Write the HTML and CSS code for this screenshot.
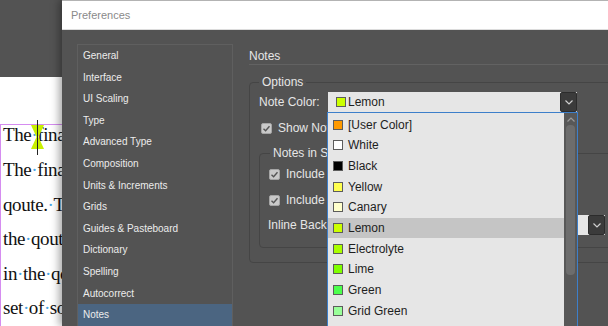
FILE: index.html
```html
<!DOCTYPE html>
<html lang="en">
<head>
<meta charset="UTF-8">
<title>Preferences</title>
<link rel="stylesheet" href="styles.css">
</head>
<body>
<div class="doc">
  <div class="pasteboard"></div>
  <div class="page">
    <div class="frame">
      <div class="story">
        <p>The<span class="sp">·</span>final<span class="sp">·</span>quote</p>
        <p>The<span class="sp">·</span>final<span class="sp">·</span>set</p>
        <p>qoute.<span class="sp">·</span>The<span class="sp">·</span>end</p>
        <p>the<span class="sp">·</span>qoute<span class="sp">·</span>is</p>
        <p>in<span class="sp">·</span>the<span class="sp">·</span>qoute</p>
        <p>set<span class="sp">·</span>of<span class="sp">·</span>some</p>
      </div>
      <svg class="anchor" width="13" height="24" viewBox="0 0 13 24"><polygon points="0,0 13,0 7.5,12 13,24 0,24 5.5,12" fill="#c8f000"/></svg>
      <span class="caret"></span>
    </div>
  </div>
</div>

<div class="dialog">
  <div class="titlebar">Preferences</div>
  <div class="dialog-body">
    <ul class="nav">
      <li>General</li>
      <li>Interface</li>
      <li>UI Scaling</li>
      <li>Type</li>
      <li>Advanced Type</li>
      <li>Composition</li>
      <li>Units &amp; Increments</li>
      <li>Grids</li>
      <li>Guides &amp; Pasteboard</li>
      <li>Dictionary</li>
      <li>Spelling</li>
      <li>Autocorrect</li>
      <li class="active">Notes</li>
    </ul>

    <div class="pane">
      <h2 class="pane-title">Notes</h2>
      <fieldset class="group">
        <legend>Options</legend>
        <div class="field">
          <span class="field-label">Note Color:</span>
          <div class="select note-select">
            <span class="swatch sw-lemon"></span>
            <span class="select-value">Lemon</span>
            <span class="select-btn"><svg width="8" height="5" viewBox="0 0 8 5"><polyline points="0.5,0.5 4,4 7.5,0.5" fill="none" stroke="#cfcfcf" stroke-width="1.2"/></svg></span>
            <div class="dropdown">
              <ul class="options">
                <li><span class="swatch sw-user"></span>[User Color]</li>
                <li><span class="swatch sw-white"></span>White</li>
                <li><span class="swatch sw-black"></span>Black</li>
                <li><span class="swatch sw-yellow"></span>Yellow</li>
                <li><span class="swatch sw-canary"></span>Canary</li>
                <li class="hover"><span class="swatch sw-lemon"></span>Lemon</li>
                <li><span class="swatch sw-electrolyte"></span>Electrolyte</li>
                <li><span class="swatch sw-lime"></span>Lime</li>
                <li><span class="swatch sw-green"></span>Green</li>
                <li><span class="swatch sw-gridgreen"></span>Grid Green</li>
                <li><span class="swatch sw-darkgreen"></span>Dark Green</li>
              </ul>
              <div class="scrollbar">
                <svg class="scroll-up" width="8" height="5" viewBox="0 0 8 5"><polyline points="0.5,4.5 4,1 7.5,4.5" fill="none" stroke="#9a9a9a" stroke-width="1.2"/></svg>
                <div class="thumb"></div>
              </div>
            </div>
          </div>
        </div>

        <label class="check">
          <span class="box"><svg width="9" height="9" viewBox="0 0 9 9"><polyline points="1.5,4.8 3.6,6.8 7.5,2.2" fill="none" stroke="#555" stroke-width="1.4"/></svg></span>
          Show Note Tool Tips
        </label>

        <fieldset class="group inner">
          <legend>Notes in Story Editor</legend>
          <label class="check">
            <span class="box"><svg width="9" height="9" viewBox="0 0 9 9"><polyline points="1.5,4.8 3.6,6.8 7.5,2.2" fill="none" stroke="#555" stroke-width="1.4"/></svg></span>
            Include Note Content When Checking Spelling
          </label>
          <label class="check">
            <span class="box"><svg width="9" height="9" viewBox="0 0 9 9"><polyline points="1.5,4.8 3.6,6.8 7.5,2.2" fill="none" stroke="#555" stroke-width="1.4"/></svg></span>
            Include Note Content in Find/Change Operations
          </label>
          <div class="field">
            <span class="field-label wide">Inline Background:</span>
            <div class="select bg-select">
              <span class="select-value">Gray</span>
              <span class="select-btn"><svg width="8" height="5" viewBox="0 0 8 5"><polyline points="0.5,0.5 4,4 7.5,0.5" fill="none" stroke="#cfcfcf" stroke-width="1.2"/></svg></span>
            </div>
          </div>
        </fieldset>
      </fieldset>
    </div>
  </div>
</div>
</body>
</html>
```

FILE: styles.css
```css
* {
  box-sizing: border-box;
}

html,
body {
  margin: 0;
  height: 326px;
  overflow: hidden;
  background: #535353;
  font-family: "Liberation Sans", Arial, sans-serif;
}

body {
  display: flex;
}

/* document behind the dialog */
.doc {
  width: 62px;
  flex: none;
  display: flex;
  flex-direction: column;
  overflow: hidden;
}

.pasteboard {
  height: 81px;
  background: #535353;
}

.page {
  flex: 1;
  background: #fff;
  padding-top: 47px;
}

.frame {
  position: relative;
  height: 100%;
  border-top: 1px solid #d58cf0;
  border-left: 1px solid #d58cf0;
}

.story {
  margin-top: -7px;
  padding-left: 2px;
  font-family: "Liberation Serif", "Times New Roman", serif;
  font-size: 19px;
  letter-spacing: -0.4px;
  line-height: 34.6px;
  color: #111;
  white-space: nowrap;
}

.story p {
  margin: 0;
}

.sp {
  color: #4aa6e6;
}

.anchor {
  position: absolute;
  left: 30px;
  top: 0;
}

.caret {
  position: absolute;
  left: 36px;
  top: -5px;
  width: 1px;
  height: 35px;
  background: #222;
}

/* dialog */
.dialog {
  flex: 1;
  position: relative;
  z-index: 1;
  display: flex;
  flex-direction: column;
  background: #535353;
  box-shadow: -3px 0 8px rgba(0, 0, 0, 0.35);
  overflow: hidden;
}

.titlebar {
  height: 30px;
  flex: none;
  background: #fff;
  border-top: 1px solid #b3b3b3;
  border-bottom: 1px solid #dcdcdc;
  padding-left: 9px;
  font-size: 11px;
  line-height: 28px;
  color: #8a8a8a;
}

.dialog-body {
  flex: 1;
  display: flex;
  align-items: flex-start;
  padding-left: 15px;
}

.nav {
  list-style: none;
  margin: 14px 0 0;
  padding: 0;
  width: 156px;
  height: 320px;
  flex: none;
  border: 1px solid #5f5f5f;
}

.nav li {
  height: 21.6px;
  line-height: 21.6px;
  padding-left: 5px;
  font-size: 10px;
  color: #ececec;
}

.nav li.active {
  background: #4b6581;
}

.pane {
  flex: 1;
  margin: 18px 0 0 16px;
  color: #e6e6e6;
  font-size: 12px;
}

.pane-title {
  margin: 0;
  font-size: 12px;
  font-weight: normal;
  line-height: 16px;
  border-bottom: 1px solid #626262;
}

.group {
  margin: 10px 0 0;
  padding: 3px 0 14px 9px;
  width: 430px;
  min-width: 0;
  border: 1px solid #454545;
  border-radius: 4px;
}

.group legend {
  padding: 0 3px;
  line-height: 14px;
  color: #e6e6e6;
}

.group.inner {
  margin-top: 10px;
  padding: 6px 0 12px 8px;
  width: 400px;
}

.group.inner legend {
  margin-left: 2px;
}

.field {
  display: flex;
  align-items: center;
}

.field-label {
  width: 69px;
  flex: none;
}

.field-label.wide {
  width: 104px;
}

.inner .field {
  margin-top: 7px;
}

.select {
  position: relative;
  display: flex;
  align-items: center;
  height: 20px;
  background: #e6e6e6;
  color: #1e1e1e;
}

.note-select {
  width: 249px;
  padding-left: 8px;
}

.bg-select {
  width: 233px;
  padding-left: 6px;
}

.select-value {
  flex: 1;
  margin-left: 2px;
}

.select-btn {
  width: 17px;
  height: 20px;
  display: flex;
  align-items: center;
  justify-content: center;
  background: #3b3b3b;
  border: 1px solid #2c2c2c;
  border-radius: 2px;
}

.swatch {
  display: inline-block;
  width: 11px;
  height: 11px;
  flex: none;
  border: 1px solid #5c5c5c;
}

.note-select .swatch {
  width: 10px;
  height: 10px;
}

.sw-user { background: #ff9a00; }
.sw-white { background: #fff; }
.sw-black { background: #000; }
.sw-yellow { background: #ffff4f; }
.sw-canary { background: #ffffcc; }
.sw-lemon { background: #ccff00; }
.sw-electrolyte { background: #aaff00; }
.sw-lime { background: #80ff00; }
.sw-green { background: #4cff4c; }
.sw-gridgreen { background: #99ff99; }
.sw-darkgreen { background: #2f8a3a; }

/* open list of the Note Color menu */
.dropdown {
  position: absolute;
  z-index: 10;
  left: -1px;
  top: 100%;
  width: 251px;
  height: 240px;
  display: flex;
  background: #e6e6e6;
  border: 1px solid #3d7fca;
  border-bottom: 0;
}

.options {
  list-style: none;
  margin: 0;
  padding: 1.5px 0 0;
  flex: 1;
}

.options li {
  display: flex;
  align-items: center;
  gap: 5px;
  height: 20.65px;
  padding-left: 5px;
  color: #1e1e1e;
}

.options li.hover {
  background: #c5c5c5;
}

.scrollbar {
  width: 13px;
  flex: none;
  background: #585858;
  display: flex;
  flex-direction: column;
  align-items: center;
}

.scroll-up {
  margin-top: 4px;
}

.thumb {
  margin-top: 3px;
  width: 9px;
  height: 150px;
  background: #6d6d6d;
  border-radius: 4px;
}

.check {
  display: flex;
  align-items: center;
  gap: 6px;
  height: 16px;
  margin-top: 8px;
  margin-left: 2px;
  white-space: nowrap;
}

.inner .check {
  margin-top: 0;
  margin-left: 1px;
}

.inner .check + .check {
  margin-top: 10px;
}

.box {
  width: 11px;
  height: 11px;
  display: flex;
  align-items: center;
  justify-content: center;
  background: #c9c9c9;
  border: 1px solid #a5a5a5;
  border-radius: 2px;
}
```
